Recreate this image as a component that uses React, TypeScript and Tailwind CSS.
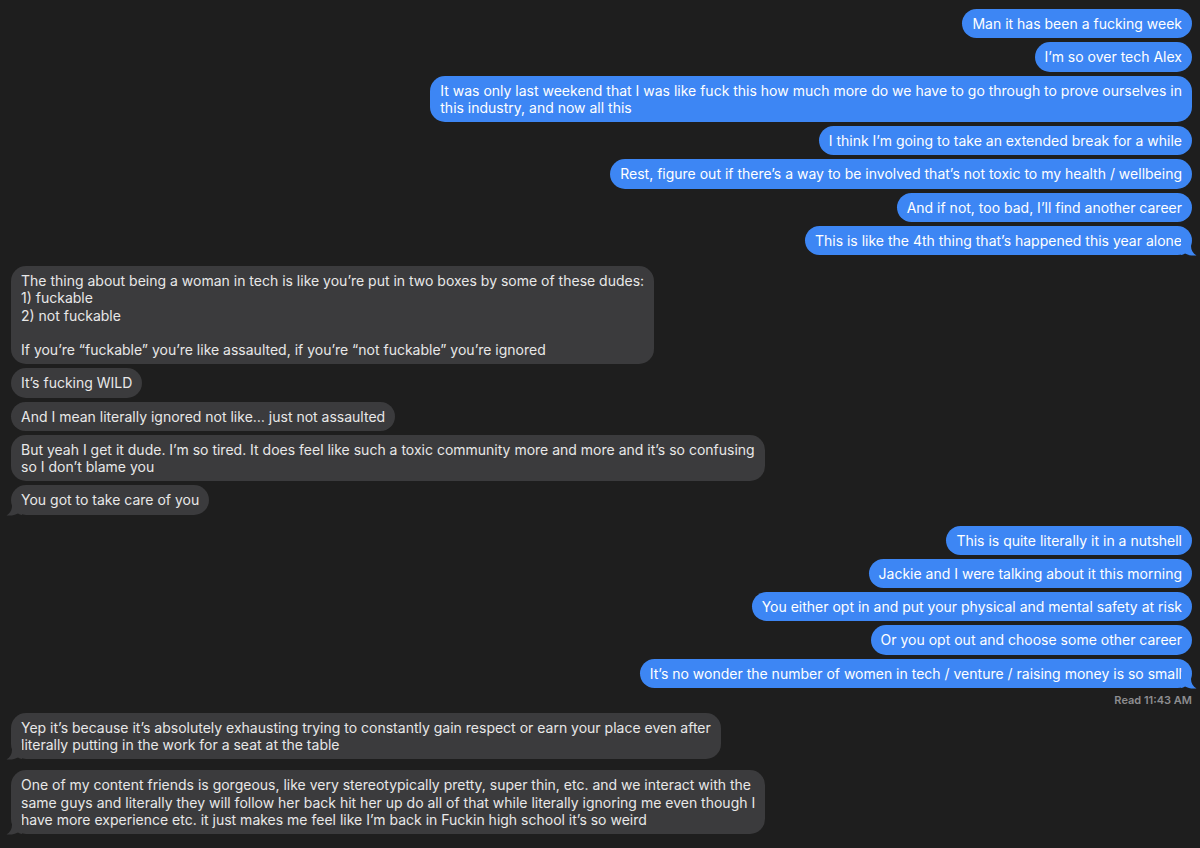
import React from "react";

type Msg = { text: string; tail?: boolean };
type Group = { from: "me" | "them"; messages: Msg[]; read?: string };

const conversation: Group[] = [
  {
    from: "me",
    messages: [
      { text: "Man it has been a fucking week" },
      { text: "I’m so over tech Alex" },
      {
        text: "It was only last weekend that I was like fuck this how much more do we have to go through to prove ourselves in\nthis industry, and now all this",
      },
      { text: "I think I’m going to take an extended break for a while" },
      { text: "Rest, figure out if there’s a way to be involved that’s not toxic to my health / wellbeing" },
      { text: "And if not, too bad, I’ll find another career" },
      { text: "This is like the 4th thing that’s happened this year alone", tail: true },
    ],
  },
  {
    from: "them",
    messages: [
      {
        text: "The thing about being a woman in tech is like you’re put in two boxes by some of these dudes:\n1) fuckable\n2) not fuckable\n\nIf you’re “fuckable” you’re like assaulted, if you’re “not fuckable” you’re ignored",
      },
      { text: "It’s fucking WILD" },
      { text: "And I mean literally ignored not like… just not assaulted" },
      {
        text: "But yeah I get it dude. I’m so tired. It does feel like such a toxic community more and more and it’s so confusing\nso I don’t blame you",
      },
      { text: "You got to take care of you", tail: true },
    ],
  },
  {
    from: "me",
    read: "Read 11:43 AM",
    messages: [
      { text: "This is quite literally it in a nutshell" },
      { text: "Jackie and I were talking about it this morning" },
      { text: "You either opt in and put your physical and mental safety at risk" },
      { text: "Or you opt out and choose some other career" },
      { text: "It’s no wonder the number of women in tech / venture / raising money is so small", tail: true },
    ],
  },
  {
    from: "them",
    messages: [
      {
        text: "Yep it’s because it’s absolutely exhausting trying to constantly gain respect or earn your place even after\nliterally putting in the work for a seat at the table",
        tail: true,
      },
    ],
  },
  {
    from: "them",
    messages: [
      {
        text: "One of my content friends is gorgeous, like very stereotypically pretty, super thin, etc. and we interact with the\nsame guys and literally they will follow her back hit her up do all of that while literally ignoring me even though I\nhave more experience etc. it just makes me feel like I’m back in Fuckin high school it’s so weird",
        tail: true,
      },
    ],
  },
];

const Tail = ({ mine }: { mine: boolean }) => (
  <svg
    width="16"
    height="17"
    viewBox="0 0 16 17"
    className={
      mine
        ? "absolute bottom-[-1px] right-[-5px] fill-[#3d86f4]"
        : "absolute bottom-[-1px] left-[-5px] -scale-x-100 fill-[#3b3b3d]"
    }
  >
    <path d="M10 0 L10 7 C10 11 12 14.5 15.5 16.4 C11.5 17 7 16.3 4 14.6 C3 15.4 1.2 16 0 16 L0 0 Z" />
  </svg>
);

const Bubble = ({ msg, mine }: { msg: Msg; mine: boolean }) => (
  <div
    className={`relative whitespace-pre rounded-[15px] px-[10px] py-[6px] text-[14px] leading-[17.25px] ${
      mine ? "self-end bg-[#3d86f4] text-white" : "self-start bg-[#3b3b3d] text-[#e8e8e8]"
    }`}
  >
    {msg.text}
    {msg.tail && <Tail mine={mine} />}
  </div>
);

export default function App() {
  return (
    <div className="min-h-[848px] w-full bg-[#1e1e1e] pr-[8px] pt-[9px] pl-[11px] font-['Inter','Liberation_Sans',sans-serif] antialiased">
      <div className="flex flex-col gap-[11px]">
        {conversation.map((group, i) => {
          const mine = group.from === "me";
          return (
            <div key={i} className="flex flex-col gap-[4px]">
              {group.messages.map((m, j) => (
                <Bubble key={j} msg={m} mine={mine} />
              ))}
              {group.read && (
                <div className="mb-[-5px] mt-[2px] self-end text-[11px] font-semibold leading-[13px] text-[#8d8d90]">
                  {group.read}
                </div>
              )}
            </div>
          );
        })}
      </div>
    </div>
  );
}
